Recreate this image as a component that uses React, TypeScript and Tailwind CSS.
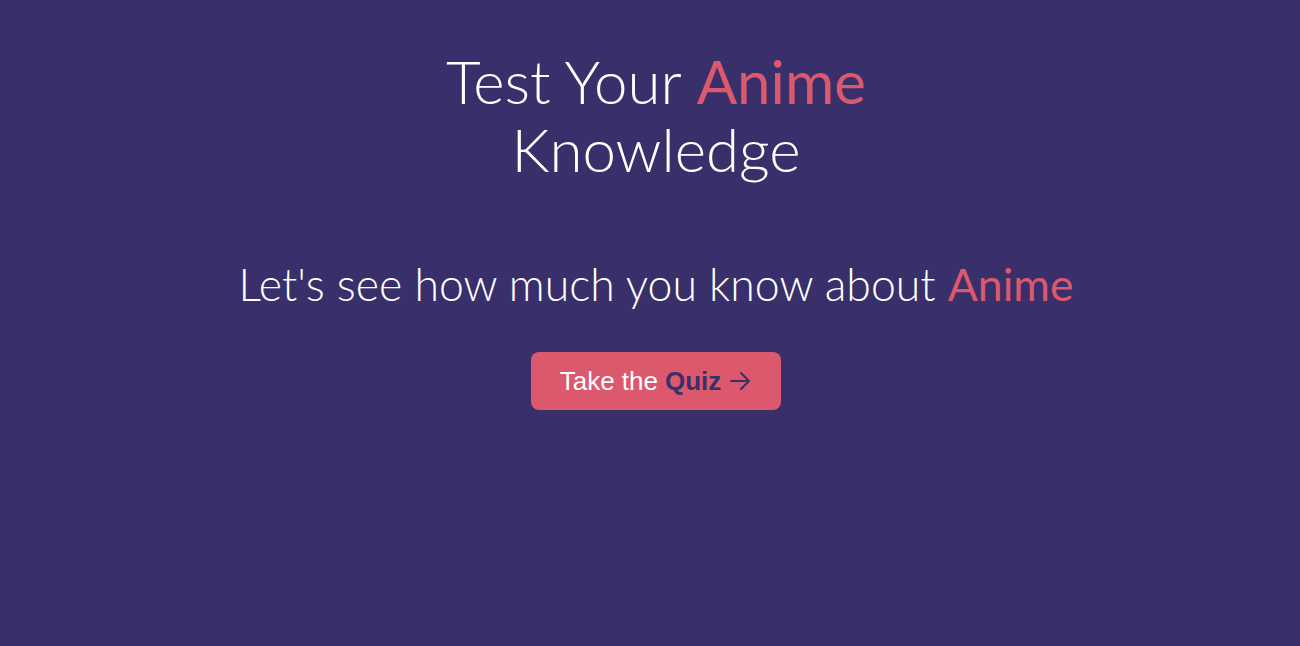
export default function App() {
  return (
    <div className="min-h-[646px] w-full bg-[#392f6a] flex flex-col items-center pt-[47px] pl-[12px]" style={{ fontFamily: "Lato, 'Open Sans', sans-serif" }}>
      <h1 className="text-center text-white font-light text-[60px] leading-[68px]">
        Test Your <span className="text-[#dc586d] font-normal">Anime</span>
        <br />
        Knowledge
      </h1>
      <p className="mt-[74px] text-center text-white font-light text-[44.6px] leading-[54px]">
        Let's see how much you know about <span className="text-[#dc586d] font-normal">Anime</span>
      </p>
      <button className="mt-[41px] w-[250px] h-[58px] rounded-lg bg-[#dc586d] flex items-center justify-center gap-[7px] text-[26px]" style={{ fontFamily: "'Liberation Sans', Arial, sans-serif" }}>
        <span className="text-white">Take the</span>
        <span className="text-[#392f6a] font-bold">Quiz</span>
        <svg width="24" height="24" viewBox="0 0 24 24" fill="none" stroke="#392f6a" strokeWidth="2" strokeLinecap="round" strokeLinejoin="round">
          <path d="M3 12h18M13 4l8 8-8 8" />
        </svg>
      </button>
    </div>
  );
}
